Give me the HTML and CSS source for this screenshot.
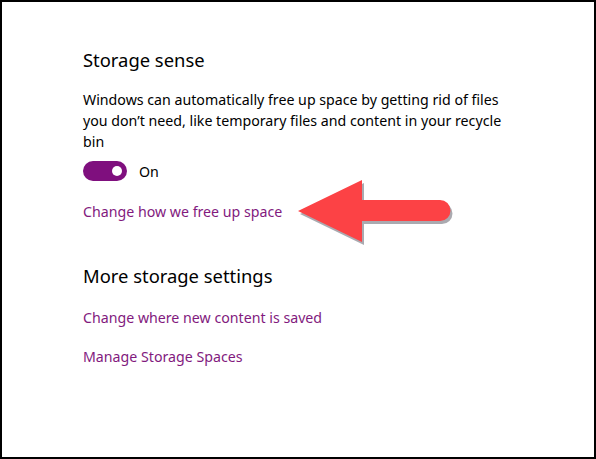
FILE: index.html
```html
<!DOCTYPE html>
<html lang="en">
<head>
<meta charset="utf-8">
<title>Storage sense</title>
<link rel="stylesheet" href="styles.css">
</head>
<body>
<div class="frame">
  <section class="group first">
    <h2 class="title">Storage sense</h2>
    <p class="desc">Windows can automatically free up space by getting rid of files you don’t need, like temporary files and content in your recycle bin</p>
    <div class="toggle-row">
      <span class="toggle"><span class="knob"></span></span>
      <span class="toggle-label">On</span>
    </div>
    <a class="link link-first" href="#">Change how we free up space</a>
  </section>
  <section class="group second">
    <h2 class="title">More storage settings</h2>
    <a class="link link-a" href="#">Change where new content is saved</a>
    <a class="link link-b" href="#">Manage Storage Spaces</a>
  </section>
  <svg class="arrow" width="596" height="459" viewBox="0 0 596 459" aria-hidden="true">
    <path class="arrow-shadow" d="M298,211 L362,180 L362,200 L440,200 A10.5,10.5 0 0 1 440,221 L362,221 L362,242 Z" transform="translate(2,3)"/>
    <path class="arrow-body" d="M298,211 L362,180 L362,200 L440,200 A10.5,10.5 0 0 1 440,221 L362,221 L362,242 Z"/>
  </svg>
</div>
</body>
</html>
```

FILE: styles.css
```css
html, body {
  margin: 0;
  padding: 0;
  background: #fff;
}

.frame {
  position: relative;
  box-sizing: border-box;
  width: 596px;
  height: 459px;
  border: 2px solid #000;
  padding: 0 0 0 81px;
  font-family: "Noto Sans", "Open Sans", sans-serif;
  color: #000;
  display: flex;
  flex-direction: column;
}

.group {
  display: flex;
  flex-direction: column;
  align-items: flex-start;
}

.first {
  padding-top: 44px;
}

.second {
  padding-top: 40px;
}

.title {
  margin: 0;
  font-size: 18.4px;
  font-weight: 400;
  line-height: 28px;
}

.desc {
  margin: 15px 0 0;
  width: 422px;
  font-size: 14.2px;
  line-height: 21px;
}

.toggle-row {
  display: flex;
  align-items: center;
  margin-top: 9px;
  height: 20px;
}

.toggle {
  box-sizing: border-box;
  width: 44px;
  height: 20px;
  border-radius: 10px;
  background: #7f0f7e;
  display: flex;
  align-items: center;
  justify-content: flex-end;
  padding-right: 5px;
}

.knob {
  width: 10px;
  height: 10px;
  border-radius: 50%;
  background: #fff;
}

.toggle-label {
  margin-left: 12px;
  font-size: 14.2px;
}

.link {
  font-size: 14.2px;
  line-height: 20px;
  color: #821a7e;
  text-decoration: none;
}

.link-first {
  margin-top: 21px;
}

.link-a {
  margin-top: 18px;
}

.link-b {
  margin-top: 19px;
}

.arrow {
  position: absolute;
  left: -2px;
  top: -2px;
}

.arrow-shadow {
  fill: #8e8e96;
  opacity: 0.75;
}

.arrow-body {
  fill: #fc4245;
}
```
